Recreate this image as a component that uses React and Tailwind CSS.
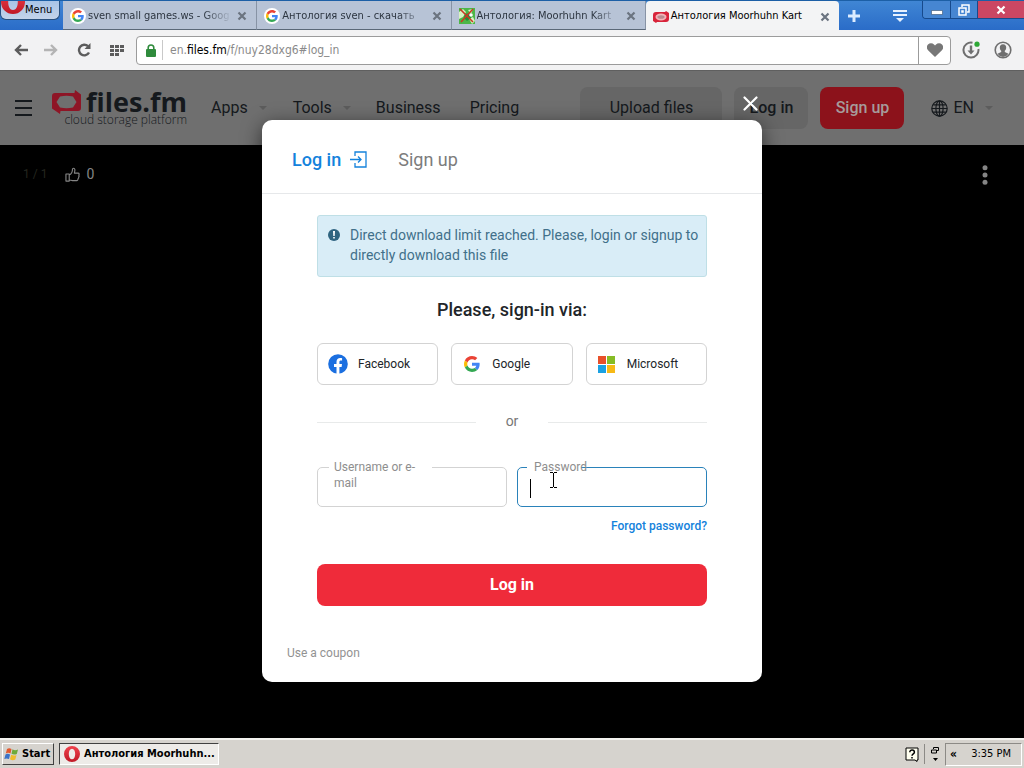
import React from "react";

const uiFont = "font-['DejaVu_Sans_Condensed','DejaVu_Sans',sans-serif]";

function GoogleIcon({ className }) {
  return (
    <svg viewBox="0 0 48 48" className={className} aria-hidden="true">
      <path fill="#ea4335" d="M24 9.5c3.54 0 6.71 1.22 9.21 3.6l6.85-6.85C35.9 2.38 30.47 0 24 0 14.62 0 6.51 5.38 2.56 13.22l7.98 6.19C12.43 13.72 17.74 9.5 24 9.5z" />
      <path fill="#4285f4" d="M46.98 24.55c0-1.57-.15-3.09-.38-4.55H24v9.02h12.94c-.58 2.96-2.26 5.48-4.78 7.18l7.73 6c4.51-4.18 7.09-10.36 7.09-17.65z" />
      <path fill="#fbbc05" d="M10.53 28.59c-.48-1.45-.76-2.99-.76-4.59s.27-3.14.76-4.59l-7.98-6.19C.92 16.46 0 20.12 0 24c0 3.88.92 7.54 2.56 10.78l7.97-6.19z" />
      <path fill="#34a853" d="M24 48c6.48 0 11.93-2.13 15.89-5.81l-7.73-6c-2.15 1.45-4.92 2.3-8.16 2.3-6.26 0-11.57-4.22-13.47-9.91l-7.98 6.19C6.51 42.62 14.62 48 24 48z" />
    </svg>
  );
}

function GoogleFavicon() {
  return (
    <span className="flex size-4 shrink-0 items-center justify-center rounded-full bg-white">
      <GoogleIcon className="size-3" />
    </span>
  );
}

function GameFavicon() {
  return (
    <svg viewBox="0 0 16 16" className="size-4 shrink-0" aria-hidden="true">
      <rect width="16" height="16" fill="#4cb648" />
      <path d="M0 4l4-3 3 3-3 5-4 2zM9 2l5-1-2 5zM10 11l4-2 2 4-3 3z" fill="#d9f2c4" />
      <path d="M6 6l5-1 1 5-4 3-3-3z" fill="#1d8f3a" />
      <path d="M1 1l13 13M14 1L2 14" stroke="#c93a24" strokeWidth="1.6" />
      <circle cx="12" cy="7" r="1.8" fill="#fff" />
    </svg>
  );
}

function FilesFavicon() {
  return (
    <svg viewBox="0 0 16 12" className="h-3 w-4 shrink-0" aria-hidden="true">
      <path d="M0 4q0-3 3-3h9l1-1 3 2v6q0 3-3 3H4l-1 1-3-2z" fill="#d8243a" />
      <ellipse cx="8" cy="6" rx="5.500" ry="3.400" fill="#f3b4b8" />
      <ellipse cx="8" cy="6" rx="3.600" ry="1.800" fill="#b98a90" />
    </svg>
  );
}

function OperaIcon({ className }) {
  return (
    <svg viewBox="0 0 24 24" className={className} aria-hidden="true">
      <defs>
        <linearGradient id="opera" x1="0" y1="0" x2="0" y2="1">
          <stop offset="0" stopColor="#f0434e" />
          <stop offset="1" stopColor="#c01826" />
        </linearGradient>
      </defs>
      <path fillRule="evenodd" fill="url(#opera)" d="M12 0a12 12 0 1 0 0 24 12 12 0 0 0 0-24zm0 4c3 0 4.800 3.500 4.800 8S15 20 12 20s-4.800-3.500-4.800-8S9 4 12 4z" />
    </svg>
  );
}

function CloseX() {
  return (
    <svg viewBox="0 0 10 10" className="size-[10px]" aria-hidden="true">
      <path d="M1.500 1.500l7 7M8.500 1.500l-7 7" stroke="currentColor" strokeWidth="2.200" />
    </svg>
  );
}

const tabs = [
  { title: "sven small games.ws - Goog", icon: <GoogleFavicon /> },
  { title: "Антология sven - скачать", icon: <GoogleFavicon /> },
  { title: "Антология: Moorhuhn Kart", icon: <GameFavicon /> },
  { title: "Антология Moorhuhn Kart", icon: <FilesFavicon />, active: true },
];

function TabBar() {
  return (
    <div className="flex h-[30px] items-start border-t border-[#1c5fa6] bg-linear-to-b from-[#4086d4] to-[#2a6cc8]">
      <button className="flex h-[19px] w-[60px] shrink-0 items-center overflow-hidden rounded-b-md border border-t-0 border-[#28507f] bg-linear-to-b from-[#a9c4e6] to-[#c3d3ea] text-[11px] text-black">
        <OperaIcon className="size-6 shrink-0 -translate-y-2" />
        Menu
      </button>
      <div className="ml-[3px] flex h-full max-w-[776px] min-w-0 flex-1 items-stretch">
        {tabs.map((tab) => (
          <div
            key={tab.title}
            className={
              tab.active
                ? "flex min-w-0 flex-1 items-center gap-[2px] rounded-t bg-[#f3f4f5] pt-[2px] pr-[6px] pl-[7px] text-black"
                : "flex min-w-0 flex-1 items-center gap-[2px] border-r border-b border-r-[#8793a5] border-b-[#5a6878] bg-[#b7c3d6] pt-[2px] pr-[6px] pl-[7px] text-[#2c3540]"
            }
          >
            {tab.icon}
            <span
              className={
                tab.active
                  ? "min-w-0 flex-1 text-[11px] whitespace-nowrap"
                  : "min-w-0 flex-1 mask-r-from-80% text-[11px] whitespace-nowrap"
              }
            >
              {tab.title}
            </span>
            <button aria-label="Close tab" className="flex size-4 shrink-0 items-center justify-center text-[#6b7480]">
              <CloseX />
            </button>
          </div>
        ))}
      </div>
      <button aria-label="New tab" className="flex h-[29px] w-[30px] items-center justify-center text-[#dcecff]">
        <svg viewBox="0 0 12 12" className="size-3"><path d="M6 0v12M0 6h12" stroke="currentColor" strokeWidth="3" /></svg>
      </button>
      <button aria-label="Tab menu" className="ml-auto flex h-[29px] w-11 items-center justify-center text-[#e6f1ff]">
        <svg viewBox="0 0 14 12" className="h-3 w-[14px]"><path d="M0 1h14M0 5h14" stroke="currentColor" strokeWidth="2" /><path d="M3 8h8l-4 4z" fill="currentColor" /></svg>
      </button>
      <div className="flex h-[18px] shrink-0 overflow-hidden rounded-bl border-b border-l border-[#174a8c] text-white">
        <button aria-label="Minimize" className="flex w-7 items-end justify-center border-r border-[#174a8c] bg-[#4686d2] pb-[3px]">
          <svg viewBox="0 0 12 5" className="h-[5px] w-3"><path d="M.5.500h11v4H.5z" fill="#fff" stroke="#37506f" strokeWidth=".6" /></svg>
        </button>
        <button aria-label="Restore" className="flex w-[27px] items-center justify-center border-r border-[#174a8c] bg-[#4686d2]">
          <svg viewBox="0 0 12 12" className="size-3" fill="none" stroke="#fff" strokeWidth="1.500"><path d="M4 3V1h7v7H9" /><path d="M1 4h7v7H1zM4 7h1v1H4z" /></svg>
        </button>
        <button aria-label="Close" className="flex w-[46px] items-center justify-center bg-[#cb4763]">
          <CloseX />
        </button>
      </div>
    </div>
  );
}

function AddressBar() {
  return (
    <div className="flex h-10 items-center bg-[#f2f2f3] pl-[14px] text-[#5c5c5c]">
      <button aria-label="Back" className="mr-4">
        <svg viewBox="0 0 14 12" className="h-3 w-[14px]" fill="none" stroke="currentColor" strokeWidth="2.400"><path d="M14 6H2M7 1L2 6l5 5" /></svg>
      </button>
      <button aria-label="Forward" className="mr-[19px] text-[#b4b4b4]">
        <svg viewBox="0 0 14 12" className="h-3 w-[14px]" fill="none" stroke="currentColor" strokeWidth="2.400"><path d="M0 6h12M7 1l5 5-5 5" /></svg>
      </button>
      <button aria-label="Reload" className="mr-[19px]">
        <svg viewBox="0 0 14 14" className="size-[14px]" fill="none" stroke="currentColor" strokeWidth="2.400"><path d="M12 9.500A5.300 5.300 0 1 1 11 3.200" /><path d="M13.500 0v6h-6z" fill="currentColor" stroke="none" /></svg>
      </button>
      <button aria-label="Speed dial" className="mr-3">
        <svg viewBox="0 0 14 11" className="h-[11px] w-[14px]" fill="currentColor"><path d="M0 0h4v3H0zM5 0h4v3H5zM10 0h4v3h-4zM0 4h4v3H0zM5 4h4v3H5zM10 4h4v3h-4zM0 8h4v3H0zM5 8h4v3H5z" /></svg>
      </button>
      <div className="flex h-[29px] min-w-0 flex-1 items-center rounded border border-[#9b9b9b] bg-white">
        <svg viewBox="0 0 10 13" className="ml-[9px] h-[13px] w-[10px] shrink-0"><path d="M2.200 6V3.800a2.800 2.800 0 0 1 5.600 0V6" fill="none" stroke="#2f8b3c" strokeWidth="1.600" /><rect y="5" width="10" height="8" rx="1" fill="#2f8b3c" /></svg>
        <span className="mr-[7px] ml-[6px] h-5 w-px bg-[#c9c9c9]" />
        <span className="min-w-0 flex-1 text-xs whitespace-nowrap text-[#8a8a8a]">
          en.<span className="text-black">files.fm</span>/f/nuy28dxg6#log_in
        </span>
        <button aria-label="Bookmark" className="flex h-full w-8 items-center justify-center border-l border-[#9b9b9b] text-[#777]">
          <svg viewBox="0 0 16 14" className="h-[14px] w-4" fill="currentColor"><path d="M8 14L1.300 7.400A4.200 4.200 0 0 1 1 1.600 4.200 4.200 0 0 1 7 1.500l1 1 1-1a4.200 4.200 0 0 1 6 .1 4.200 4.200 0 0 1-.3 5.800z" /></svg>
        </button>
      </div>
      <button aria-label="Downloads" className="ml-[11px]">
        <svg viewBox="0 0 18 18" className="size-[18px]" fill="none" stroke="#6f6f6f" strokeWidth="2"><path d="M10.500 1.700A7.500 7.500 0 1 0 16.400 8" /><path d="M9 4.500v6" strokeWidth="2.400" /><path d="M5.500 9.500h7L9 13.500z" fill="#6f6f6f" stroke="none" /><circle cx="15" cy="3.200" r="2.600" fill="#2ea836" stroke="none" /></svg>
      </button>
      <button aria-label="Profile" className="mr-3 ml-[14px]">
        <svg viewBox="0 0 18 18" className="size-[18px]"><circle cx="9" cy="9" r="7.800" fill="none" stroke="#6f6f6f" strokeWidth="1.600" /><path d="M9 3.200c2.200 0 3.200 1.500 3.200 3.300 0 1.500-.6 2.500-1.400 3.300v1.200l3.700 1.700A7 7 0 0 1 9 16a7 7 0 0 1-5.500-3.300L7.200 11V9.800C6.400 9 5.800 8 5.800 6.500c0-1.800 1-3.300 3.200-3.300z" fill="#6f6f6f" /></svg>
      </button>
    </div>
  );
}

function Caret() {
  return <svg viewBox="0 0 8 4" className="h-1 w-2 text-[#5c5c5c]" fill="currentColor"><path d="M0 0h8L4 4z" /></svg>;
}

function SiteHeader() {
  return (
    <header className="flex h-[75px] items-center border-t border-[#5f5f5f] bg-[#6f6f6f] pl-[15px] text-base text-[#15191d]">
      <button aria-label="Open menu" className="mr-5">
        <svg viewBox="0 0 17 16" className="h-4 w-[17px]" stroke="currentColor" strokeWidth="2"><path d="M0 1h17M0 8h17M0 15h17" /></svg>
      </button>
      <a href="#home" className="mr-6 flex w-[135px] flex-col items-end">
        <span className="flex items-center gap-[5px]">
          <svg viewBox="0 0 29 24" className="h-6 w-[29px] shrink-0">
            <path fillRule="evenodd" fill="#8e1526" d="M0 6Q0 3 3 3h19.500L23 0l6 4.500V18q0 3-3 3H8.500L8 24l-8-5.500zM8 6.500L4.500 12 8 17.500q6.500 1.500 13 0l3.500-5.500L21 6.500q-6.500-1.500-13 0z" />
          </svg>
          <span className="text-[27px] leading-[22px] font-bold font-['Open_Sans',sans-serif]">files.fm</span>
        </span>
        <span className="text-xs leading-3 font-light whitespace-nowrap font-['Open_Sans',sans-serif]">cloud storage platform</span>
      </a>
      <nav className="flex items-center">
        <a href="#apps" className="mr-[11px]">Apps</a>
        <Caret />
        <a href="#tools" className="mr-[11px] ml-[26px]">Tools</a>
        <Caret />
        <a href="#business" className="ml-[25px]">Business</a>
        <a href="#pricing" className="ml-[29px]">Pricing</a>
      </nav>
      <button className="ml-auto h-[42px] w-[142px] rounded-lg bg-[#666]">Upload files</button>
      <button className="ml-3 h-[42px] w-[74px] rounded-lg bg-[#666] font-medium">Log in</button>
      <button className="ml-3 h-[42px] w-[84px] rounded-lg bg-[#8c121b] font-medium text-[#a69b9b]">Sign up</button>
      <button className="mr-[31px] ml-[27px] flex items-center gap-[5px]">
        <svg viewBox="0 0 17 17" className="size-[17px]" fill="none" stroke="currentColor" strokeWidth="1.200"><circle cx="8.500" cy="8.500" r="7.700" /><ellipse cx="8.500" cy="8.500" rx="3.600" ry="7.700" /><path d="M8.500 1v15M1 8.500h15M2.300 4.800h12.400M2.300 12.200h12.400" /></svg>
        EN
        <span className="ml-[6px]"><Caret /></span>
      </button>
    </header>
  );
}

function Viewer() {
  return (
    <section className="flex flex-1 items-start bg-black pt-[19px] pr-9 pl-[23px] text-sm leading-5">
      <span className="mr-[18px] text-xs leading-5 text-[#24261f]">1 / 1</span>
      <button aria-label="Like" className="flex items-center gap-[6px] text-[#858585]">
        <svg viewBox="0 0 16 16" className="size-[15px]" fill="none" stroke="currentColor" strokeWidth="1.200" strokeLinejoin="round"><path d="M1 7.500h3.500V15H1zM4.500 8.500c2-1 3.500-3 3.500-6.500 1.500-1.500 3 0 2.500 2L10 6.500h4c1.300 0 1.400 1.600.6 2.200.8.600.6 1.700-.2 2 .5.800.1 1.600-.6 1.800.2 1-.3 2-1.400 2H8c-1.300 0-2-.6-3.500-.6" /></svg>
        <span>0</span>
      </button>
      <button aria-label="More" className="ml-auto pt-px">
        <svg viewBox="0 0 6 20" className="h-5 w-[6px]" fill="#858585"><circle cx="3" cy="2.700" r="2.500" /><circle cx="3" cy="10" r="2.500" /><circle cx="3" cy="17.300" r="2.500" /></svg>
      </button>
    </section>
  );
}

function SocialButton({ icon, children }) {
  return (
    <button className="flex h-[42px] items-center gap-[10px] rounded-md border border-[#d3d3d3] pl-[10px] text-xs text-[#212529]">
      <span className="flex size-5 items-center justify-center">{icon}</span>
      {children}
    </button>
  );
}

function LoginDialog() {
  return (
    <div role="dialog" aria-label="Log in" className="relative w-[500px] max-w-full rounded-[10px] bg-white shadow-[0_5px_20px_rgba(0,0,0,0.6)]">
      <button aria-label="Close dialog" className="absolute -top-6 right-1 text-white">
        <svg viewBox="0 0 15 15" className="size-[15px]"><path d="M1.500 1.500l12 12M13.500 1.500l-12 12" stroke="currentColor" strokeWidth="2.200" strokeLinecap="round" /></svg>
      </button>
      <div className="flex h-[74px] items-center border-b border-[#e6e8ea] px-[30px] pt-[6px] text-lg">
        <button className="mr-[31px] flex items-center gap-[9px] font-medium text-[#1482dc]">
          Log in
          <svg viewBox="0 0 17 17" className="size-[17px]" fill="none" stroke="currentColor" strokeWidth="1.300"><path d="M5 5V1h11v15H5v-4M0 8.500h11M8 5.500l3 3-3 3" /></svg>
        </button>
        <button className="text-[#7c7c7c]">Sign up</button>
      </div>
      <div className="px-[55px] pt-[21px]">
        <div role="alert" className="flex gap-[10px] rounded-[3px] border border-[#bfdfe6] bg-[#d9edf7] pt-[9px] pr-1 pb-[11px] pl-[10px] text-sm leading-5 text-[#41708a]">
          <svg viewBox="0 0 12 12" className="mt-1 size-3 shrink-0"><circle cx="6" cy="6" r="6" fill="#2f6480" /><path d="M5 2h2l-.3 5H5.300zM5.200 8h1.600v1.600H5.200z" fill="#fff" /></svg>
          <p>Direct download limit reached. Please, login or signup to directly download this file</p>
        </div>
        <h2 className="mt-5 text-center text-lg leading-[26px] font-medium text-[#212529]">Please, sign-in via:</h2>
        <div className="mt-5 grid grid-cols-3 gap-[13px]">
          <SocialButton icon={<svg viewBox="0 0 20 20" className="size-5"><circle cx="10" cy="10" r="9.800" fill="#1b6fe0" /><path d="M8.500 20v-7H6v-3h2.500V7.800C8.500 5.300 10 4 12.200 4c1 0 1.900.2 1.900.2v2.400h-1.200c-1.200 0-1.500.7-1.500 1.500V10h2.600l-.4 3h-2.200v7z" fill="#fff" /></svg>}>Facebook</SocialButton>
          <SocialButton icon={<GoogleIcon className="size-4" />}>Google</SocialButton>
          <SocialButton icon={<svg viewBox="0 0 17 17" className="size-[17px]"><path d="M0 0h8v8H0z" fill="#e8502a" /><path d="M9 0h8v8H9z" fill="#86bc25" /><path d="M0 9h8v8H0z" fill="#1ba1e2" /><path d="M9 9h8v8H9z" fill="#f7b916" /></svg>}>Microsoft</SocialButton>
        </div>
        <div className="mt-[26px] flex items-center text-sm leading-5 text-[#777]">
          <span className="mt-[3px] h-px flex-1 bg-[#e8eaea]" />
          <span className="w-[72px] text-center">or</span>
          <span className="mt-[3px] h-px flex-1 bg-[#e8eaea]" />
        </div>
        <form className="mt-9 grid grid-cols-2 gap-x-[10px]" onSubmit={(e) => e.preventDefault()}>
          <div className="relative">
            <input id="user" type="text" className="h-10 w-full rounded-[5px] border border-[#d3d3d3] px-3 text-sm outline-none" />
            <label htmlFor="user" className="absolute -top-2 left-3 w-[103px] bg-white pr-3 pl-[5px] text-xs leading-4 text-[#8e8e8e]">Username or e-mail</label>
          </div>
          <div className="relative">
            <input id="pass" type="password" className="h-10 w-full rounded-[5px] border border-[#2a82ba] px-3 text-sm outline-none" />
            <label htmlFor="pass" className="absolute -top-2 left-[10px] bg-linear-to-r from-white from-90% to-transparent to-90% pl-[7px] text-xs leading-4 text-[#8e8e8e]">Password</label>
            <span className="absolute top-3 left-[13px] h-[19px] w-px bg-black" />
            <svg viewBox="0 0 7 16" className="absolute top-[5px] left-[33px] h-4 w-[7px]" fill="none" stroke="#000"><path d="M0 .5h3M4 .5h3M3.500 1v14M0 15.500h3M4 15.500h3" /></svg>
          </div>
          <a href="#forgot" className="col-span-2 mt-[11px] justify-self-end text-xs leading-4 font-medium text-[#1482dc]">Forgot password?</a>
          <button type="submit" className="col-span-2 mt-[30px] h-[42px] rounded-lg bg-[#ef2b3a] text-base font-bold text-white">Log in</button>
        </form>
      </div>
      <div className="px-[25px] pt-[39px] pb-[21px] text-xs leading-4">
        <a href="#coupon" className="text-[#929292]">Use a coupon</a>
      </div>
    </div>
  );
}

function Taskbar() {
  return (
    <footer className="flex h-[30px] items-center border-t-2 border-t-[#f4f3f0] bg-[#d6d3ce] pl-[2px] text-[11px] text-black">
      <button className="mr-[5px] flex h-[22px] w-[52px] items-center gap-[2px] border border-t-white border-r-[#404040] border-b-[#404040] border-l-white pl-[1px] font-bold">
        <svg viewBox="0 0 16 14" className="h-[14px] w-4"><path d="M3 2q2-1.500 4.500 0L6.500 6.500Q4 5.200 1.800 6.500z" fill="#e2592f" /><path d="M8.500 2.300Q11 4 14 2.500L12.800 7Q10 8.300 7.500 6.800z" fill="#6faa3a" /><path d="M1.500 7.500q2-1.300 4.600 0L5 12Q2.500 10.800.3 12z" fill="#3b73c8" /><path d="M7.200 7.800Q10 9.300 12.500 8l-1.200 4.500Q8.500 14 6 12.300z" fill="#f0bc2c" /></svg>
        Start
      </button>
      <button className="flex h-[22px] w-[160px] items-center gap-[4px] border border-t-[#404040] border-r-white border-b-white border-l-[#404040] bg-[#edebe8] pl-1 font-bold whitespace-nowrap">
        <OperaIcon className="size-4 shrink-0" />
        Антология Moorhuhn...
      </button>
      <button aria-label="Help" className="mr-[5px] ml-auto">
        <svg viewBox="0 0 14 15" className="h-[15px] w-[14px]"><path d="M1 1h12v12h-1v1.500L10 13H1z" fill="#fffff0" stroke="#000" /><path d="M4.800 5.200c0-3 4.600-2.800 4.600 0C9.400 7 7 6.800 7 8.800M7 10v1.600" fill="none" stroke="#000" strokeWidth="1.500" /></svg>
      </button>
      <span className="h-5 w-px bg-[#8c8a86]" />
      <span className="mx-[6px] flex flex-col items-center gap-1">
        <svg viewBox="0 0 8 7" className="h-[7px] w-2" fill="none" stroke="#000"><path d="M2.500 2V.5h5v3H6M.5 3h5v3h-5z" /></svg>
        <svg viewBox="0 0 5 3" className="h-[3px] w-[5px]"><path d="M0 0h5L2.500 3z" /></svg>
      </span>
      <div className="mr-[2px] flex h-[23px] w-[77px] items-center border border-t-[#8c8a86] border-r-white border-b-white border-l-[#8c8a86] pl-1">
        <span className="text-[12px] font-bold">«</span>
        <span className="ml-auto pr-[10px] whitespace-nowrap">3:35 PM</span>
      </div>
    </footer>
  );
}

export default function App() {
  return (
    <div className={`${uiFont} flex min-h-screen flex-col bg-black`}>
      <TabBar />
      <AddressBar />
      <main className="relative flex flex-1 flex-col overflow-hidden font-[Roboto,sans-serif]">
        <SiteHeader />
        <Viewer />
        <div className="absolute inset-0 flex items-start justify-center pt-[50px]">
          <LoginDialog />
        </div>
      </main>
      <Taskbar />
    </div>
  );
}
